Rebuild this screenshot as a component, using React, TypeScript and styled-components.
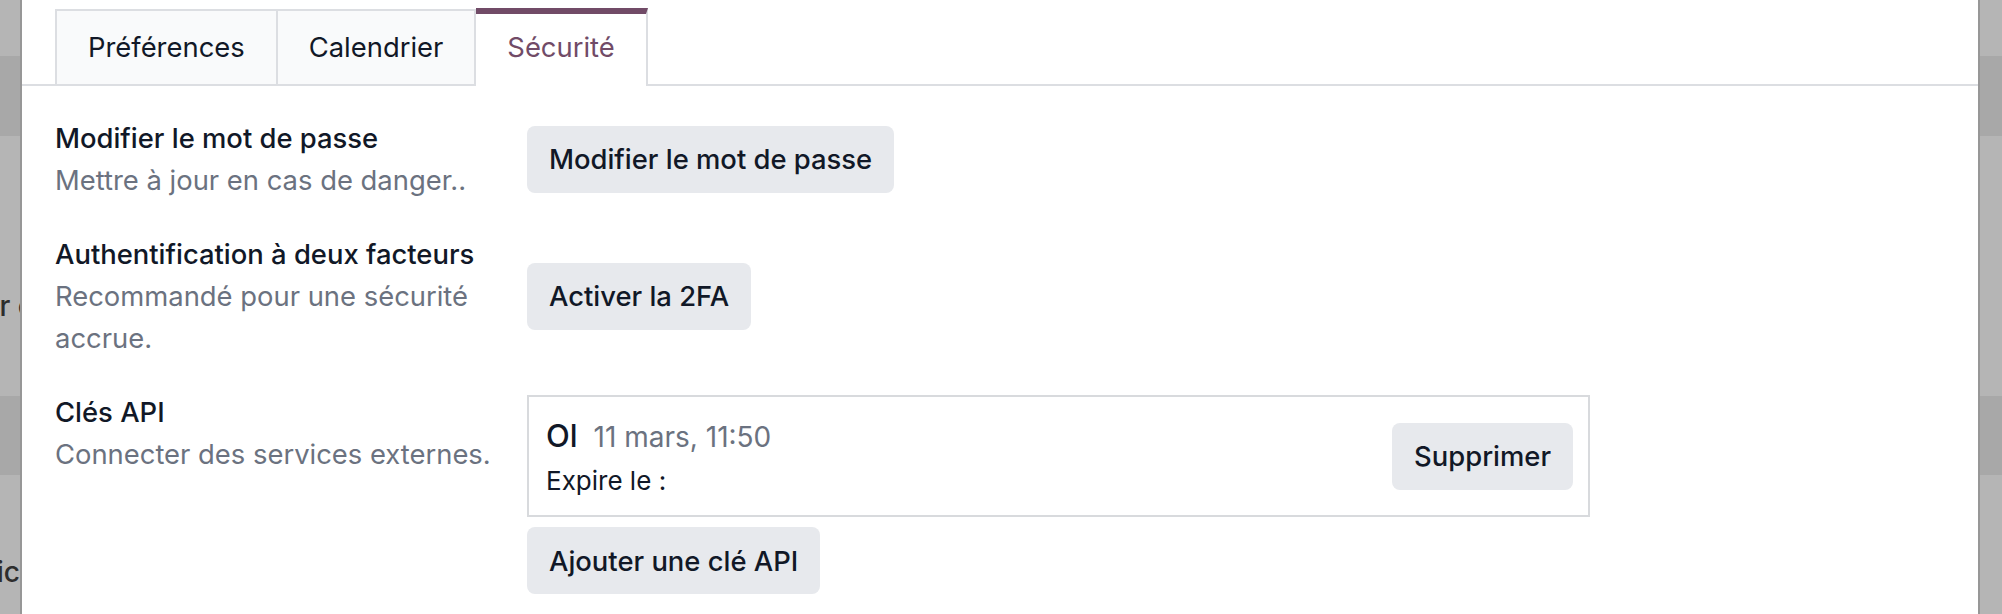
import React from "react";
import styled, { createGlobalStyle } from "styled-components";

interface IApiKey {
  name: string;
  date: string;
  expire: string;
}

interface ISettingRow {
  title: string;
  description: string;
  align: "center" | "flex-start";
  action?: string;
  keys?: Array<IApiKey>;
}

const TABS = ["Préférences", "Calendrier", "Sécurité"];

const ROWS: Array<ISettingRow> = [
  {
    title: "Modifier le mot de passe",
    description: "Mettre à jour en cas de danger..",
    align: "center",
    action: "Modifier le mot de passe",
  },
  {
    title: "Authentification à deux facteurs",
    description: "Recommandé pour une sécurité accrue.",
    align: "center",
    action: "Activer la 2FA",
  },
  {
    title: "Clés API",
    description: "Connecter des services externes.",
    align: "flex-start",
    keys: [{ name: "Ol", date: "11 mars, 11:50", expire: "Expire le :" }],
  },
];

const GlobalStyle = createGlobalStyle`
  * {
    box-sizing: border-box;
  }

  body {
    margin: 0;
    font-family: "Inter", "Liberation Sans", sans-serif;
    color: #111827;
    background: #b5b5b5;
  }
`;

const Backdrop = styled.div`
  display: flex;
  width: 2002px;
  height: 614px;
  overflow: hidden;
  background: linear-gradient(
    to bottom,
    #b5b5b5 0 56px,
    #a8a8a8 56px 136px,
    #b5b5b5 136px 396px,
    #a8a8a8 396px 475px,
    #b5b5b5 475px
  );
`;

const Gutter = styled.div<{ $width: number }>`
  width: ${({ $width }) => $width}px;
  flex-shrink: 0;
  overflow: hidden;
  display: flex;
  flex-direction: column;
  padding-top: 285px;
`;

const GutterLine = styled.div<{ $top: number; $pad: number }>`
  display: flex;
  justify-content: flex-end;
  width: ${({ $pad }) => $pad}px;
  margin-top: ${({ $top }) => $top}px;
  height: 42px;
  line-height: 42px;
  font-size: 28px;
  font-weight: 500;
  color: #2d2d2d;
  white-space: nowrap;
`;

const Modal = styled.div`
  flex: 1;
  background: #ffffff;
  border-left: 2px solid #979797;
  border-right: 2px solid #979797;
`;

const TabBar = styled.ul`
  display: flex;
  align-items: flex-end;
  list-style: none;
  margin: 8px 0 0;
  padding: 0 0 0 33px;
  height: 78px;
  border-bottom: 2px solid #dcdee2;
`;

const Tab = styled.li<{ $active: boolean }>`
  display: flex;
  align-items: center;
  padding: 0 31px;
  padding-bottom: ${({ $active }) => ($active ? "6px" : "2px")};
  font-size: 27.4px;
  height: ${({ $active }) => ($active ? "78px" : "75px")};
  margin-bottom: ${({ $active }) => ($active ? "-2px" : "0")};
  background: ${({ $active }) => ($active ? "#ffffff" : "#f9fafb")};
  color: ${({ $active }) => ($active ? "#714b67" : "#111827")};
  border-top: ${({ $active }) =>
    $active ? "6px solid #714b67" : "2px solid #dcdee2"};
  border-right: 2px solid #dcdee2;

  &:first-child {
    border-left: 2px solid #dcdee2;
  }
`;

const Content = styled.div`
  display: flex;
  flex-direction: column;
  gap: 32px;
  padding: 31px 33px 0;
`;

const Row = styled.section<{ $align: string }>`
  display: flex;
  align-items: ${({ $align }) => $align};
  gap: 16px;
`;

const LabelCol = styled.div`
  width: 456px;
  flex-shrink: 0;
  font-size: 27.4px;
  line-height: 42px;

  h3 {
    margin: 0;
    font-size: 27.4px;
    font-weight: 500;
    color: #111827;
  }

  p {
    margin: 0;
    color: #6b7280;
  }
`;

const ControlCol = styled.div<{ $offset: number }>`
  display: flex;
  flex-direction: column;
  align-items: flex-start;
  gap: 10px;
  padding-top: ${({ $offset }) => $offset}px;
`;

const Button = styled.button`
  height: 67px;
  padding: 0 22px;
  border: none;
  border-radius: 8px;
  background: #e7e9ed;
  color: #111827;
  font-family: "Inter", "Liberation Sans", sans-serif;
  font-size: 27.4px;
  font-weight: 500;
  white-space: nowrap;
`;

const KeyCard = styled.div`
  display: flex;
  align-items: center;
  justify-content: space-between;
  width: 1063px;
  height: 122px;
  padding: 0 15px 0 17px;
  border: 2px solid #d8dadd;

  .info {
    padding-top: 5px;
  }

  .name {
    display: flex;
    align-items: baseline;
    gap: 16px;
    height: 42px;
  }

  .name strong {
    font-size: 31px;
    font-weight: 500;
    color: #111827;
  }

  .name span {
    font-size: 28px;
    color: #6b7280;
  }

  .expire {
    margin-top: 2px;
    font-size: 26px;
    line-height: 40px;
    color: #111827;
  }
`;

const App = () => {
  return (
    <>
      <GlobalStyle />
      <Backdrop>
        <Gutter $width={20}>
          <GutterLine $top={0} $pad={34}>
            r c
          </GutterLine>
          <GutterLine $top={224} $pad={20}>
            ic
          </GutterLine>
        </Gutter>

        <Modal>
          <TabBar>
            {TABS.map((tab) => (
              <Tab key={tab} $active={tab === "Sécurité"}>
                {tab}
              </Tab>
            ))}
          </TabBar>

          <Content>
            {ROWS.map(({ title, description, align, action, keys }) => (
              <Row key={title} $align={align}>
                <LabelCol>
                  <h3>{title}</h3>
                  <p>{description}</p>
                </LabelCol>
                <ControlCol $offset={keys ? 4 : 0}>
                  {keys?.map(({ name, date, expire }) => (
                    <KeyCard key={name}>
                      <div className="info">
                        <div className="name">
                          <strong>{name}</strong>
                          <span>{date}</span>
                        </div>
                        <div className="expire">{expire}</div>
                      </div>
                      <Button>Supprimer</Button>
                    </KeyCard>
                  ))}
                  {keys ? (
                    <Button>Ajouter une clé API</Button>
                  ) : (
                    <Button>{action}</Button>
                  )}
                </ControlCol>
              </Row>
            ))}
          </Content>
        </Modal>

        <Gutter $width={22} />
      </Backdrop>
    </>
  );
};

export default App;
